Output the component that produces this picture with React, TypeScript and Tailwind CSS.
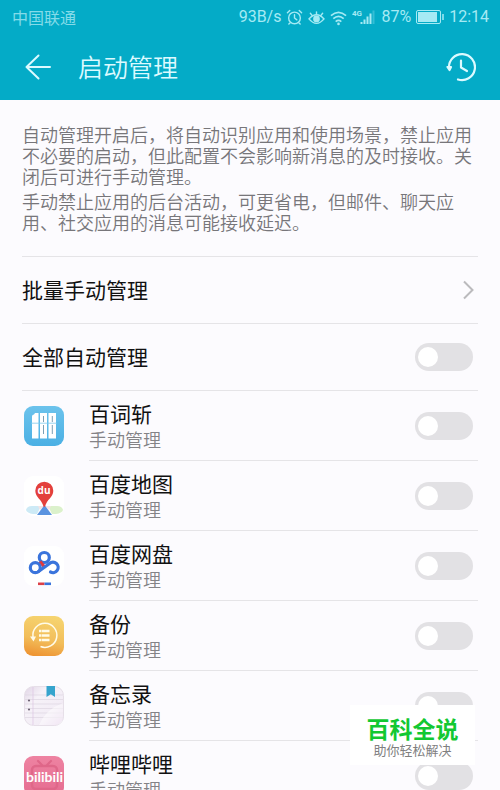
import { useState, type ReactNode } from 'react'

interface AppEntry {
  id: string
  name: string
  icon: ReactNode
}

function BaicizhanIcon() {
  return (
    <svg className="size-10" viewBox="0 0 40 40" aria-hidden="true">
      <defs>
        <linearGradient id="bcz" x1="0" y1="0" x2="0" y2="1">
          <stop offset="0" stopColor="#6cc3ec" />
          <stop offset="1" stopColor="#4bb0e4" />
        </linearGradient>
      </defs>
      <rect width="40" height="40" rx="9" fill="url(#bcz)" />
      <path d="M8 10.500q0-2 2-2l1-1.500h3.500v25.500H8zM16 7h7v25.500h-7zM24.500 7h7.500v25.500h-7.500z" fill="#fff" />
      <path d="M19.500 10v6M19.500 19v9M28.300 10v6M28.300 19v9" stroke="#7d9fb3" strokeWidth="1" />
      <path d="M7 17.200h26" stroke="#7fcaee" strokeWidth="0.800" />
    </svg>
  )
}

function MapIcon() {
  return (
    <svg className="size-10" viewBox="0 0 40 40" aria-hidden="true">
      <rect width="40" height="40" rx="9" fill="#fff" />
      <path d="M2 34q1-4 6-4h9l-4 8H9q-6-1-7-4z" fill="#cdeaf6" />
      <path d="M39 34q-1-4-6-4h-9l4 8h4q6-1 7-4z" fill="#dbf1cb" />
      <path d="M14 30h6l-4 4zM27 30h-6l4 4z" fill="#f6e3e3" />
      <path d="M20.500 29 28 39H13z" fill="#5a93e0" />
      <path d="M20.300 5.700a9 9 0 0 1 9 9c0 6.500-6.500 8.500-8.300 16h-1.400c-1.800-7.500-8.300-9.500-8.300-16a9 9 0 0 1 9-9z" fill="#e3403c" />
      <text x="20" y="18" textAnchor="middle" fontSize="10" fontWeight="700" fill="#fff" fontFamily="Open Sans, sans-serif">du</text>
    </svg>
  )
}

function NetdiskIcon() {
  return (
    <svg className="size-10" viewBox="0 0 40 40" fill="none" aria-hidden="true">
      <rect width="40" height="40" rx="9" fill="#fff" />
      <circle cx="20.300" cy="11.500" r="5" stroke="#3a74dc" strokeWidth="3.200" />
      <path d="M16 15.500 20 20.500" stroke="#e0393e" strokeWidth="3.400" />
      <circle cx="11.300" cy="21.700" r="5" stroke="#3a74dc" strokeWidth="3.200" />
      <path d="M14.500 25.500 25.500 17.500a5.200 5.200 0 1 1 1 8.500" stroke="#3a74dc" strokeWidth="3.200" strokeLinecap="round" />
      <path d="M14 37.800h6.500" stroke="#dc4048" strokeWidth="2.600" />
      <path d="M20.500 37.800h6.500" stroke="#3a74dc" strokeWidth="2.600" />
    </svg>
  )
}

function BackupIcon() {
  return (
    <svg className="size-10" viewBox="0 0 40 40" fill="none" aria-hidden="true">
      <defs>
        <linearGradient id="backup" x1="0.600" y1="0" x2="0.400" y2="1">
          <stop offset="0" stopColor="#f6d470" />
          <stop offset="0.600" stopColor="#f2bd5a" />
          <stop offset="1" stopColor="#ee9534" />
        </linearGradient>
      </defs>
      <rect width="40" height="40" rx="9" fill="url(#backup)" />
      <path d="M9 21A12 12 0 1 1 16.500 30.500" stroke="#fffbe8" strokeWidth="1.500" />
      <path d="M6 20.500h6l-2.500 5z" fill="#fffbe8" />
      <path d="M15 15h2M17.500 15h8M15 19.500h2M17.500 19.500h8M15 24h2M17.500 24h8" stroke="#fffbe8" strokeWidth="2.600" />
    </svg>
  )
}

function MemoIcon() {
  return (
    <svg className="size-10" viewBox="0 0 40 40" fill="none" aria-hidden="true">
      <defs>
        <linearGradient id="memo" x1="0" y1="0" x2="1" y2="1">
          <stop offset="0" stopColor="#e0d4e6" />
          <stop offset="0.300" stopColor="#f6f2f8" />
          <stop offset="0.650" stopColor="#f3edf6" />
          <stop offset="1" stopColor="#e3cbe8" />
        </linearGradient>
      </defs>
      <rect x="0.500" y="0.500" width="39" height="39" rx="9" fill="url(#memo)" stroke="#e6dfe8" />
      <path d="M1 9h38M1 13.500h38M1 18h38M1 22.500h38M1 27h38M1 31.500h38" stroke="#ddd6e1" strokeWidth="0.700" />
      <path d="M9 1v38" stroke="#dcc4e2" strokeWidth="0.700" />
      <path d="M15 39Q22 23 39 17v14q0 8-8 8z" fill="#fff" opacity="0.500" />
      <circle cx="5" cy="14.500" r="1.100" fill="#6f6575" />
      <circle cx="5" cy="23.500" r="1.100" fill="#6f6575" />
      <path d="M22.500 0H31v11l-4.200-2.800-4.300 2.800z" fill="#36a4cd" />
    </svg>
  )
}

function BilibiliIcon() {
  return (
    <svg className="size-10" viewBox="0 0 40 40" fill="none" aria-hidden="true">
      <defs>
        <linearGradient id="bili" x1="0" y1="0" x2="0" y2="1">
          <stop offset="0" stopColor="#ee83a2" />
          <stop offset="1" stopColor="#e56c90" />
        </linearGradient>
      </defs>
      <rect width="40" height="40" rx="9" fill="url(#bili)" />
      <rect x="8" y="10" width="25" height="23" rx="4" stroke="#df6789" strokeWidth="2.500" />
      <path d="M14 5l4 4M27 5l-4 4" stroke="#df6789" strokeWidth="2.200" strokeLinecap="round" />
      <text x="20.500" y="26" textAnchor="middle" fontSize="14" fontWeight="700" fill="#fff" fontFamily="Liberation Sans Narrow, Lato, sans-serif">bilibili</text>
    </svg>
  )
}

const apps: AppEntry[] = [
  { id: 'baicizhan', name: '百词斩', icon: <BaicizhanIcon /> },
  { id: 'map', name: '百度地图', icon: <MapIcon /> },
  { id: 'netdisk', name: '百度网盘', icon: <NetdiskIcon /> },
  { id: 'backup', name: '备份', icon: <BackupIcon /> },
  { id: 'memo', name: '备忘录', icon: <MemoIcon /> },
  { id: 'bilibili', name: '哔哩哔哩', icon: <BilibiliIcon /> },
]

interface SwitchProps {
  id: string
  checked: boolean
  onChange: (checked: boolean) => void
}

function Switch({ id, checked, onChange }: SwitchProps) {
  return (
    <input
      id={id}
      type="checkbox"
      role="switch"
      checked={checked}
      onChange={(e) => onChange(e.target.checked)}
      className="flex h-7 w-[58px] shrink-0 cursor-pointer appearance-none items-center rounded-full bg-[#e2e1e4] px-[3px] before:size-5 before:rounded-full before:bg-white checked:justify-end checked:bg-[#04abc7]"
    />
  )
}

function StatusBar() {
  return (
    <div className="flex h-[34px] items-center justify-between pr-[11px] pl-3 text-[#a5eaf4]">
      <span className="text-base text-[#84dbe9]">中国联通</span>
      <div className="flex items-center gap-[5px] font-[Roboto,sans-serif] text-base">
        <span>93B/s</span>
        <svg className="size-[17px]" viewBox="0 0 18 18" fill="none" stroke="currentColor" strokeWidth="1.500" strokeLinecap="round" aria-hidden="true">
          <circle cx="9" cy="9.500" r="6.200" />
          <path d="M9 6v3.500l2.500 2M1.500 4 4 1.500M16.500 4 14 1.500M4.500 14.500 3 16M13.500 14.500 15 16" />
        </svg>
        <svg className="size-[17px]" viewBox="0 0 18 18" fill="none" stroke="currentColor" strokeWidth="1.500" strokeLinecap="round" aria-hidden="true">
          <path d="M1 10.500q8-9 16 0-8 9.500-16 0z" />
          <circle cx="9" cy="10.500" r="2.800" fill="currentColor" />
          <path d="M9 5.500V3M4.500 7 2.500 4.500M13.500 7l2-2.500" />
        </svg>
        <svg className="size-[17px]" viewBox="0 0 18 18" fill="none" stroke="currentColor" strokeWidth="1.800" aria-hidden="true">
          <path d="M1 7q8-7 16 0M3.500 10.300q5.500-5 11 0M6 13.300q3-2.500 6 0" />
          <circle cx="9" cy="15.800" r="1.400" fill="currentColor" stroke="none" />
        </svg>
        <svg className="h-[18px] w-6" viewBox="0 0 24 18" aria-hidden="true">
          <text x="0" y="8" fontSize="8" fontWeight="700" fill="currentColor" fontFamily="Liberation Sans Narrow, Roboto, sans-serif">4G</text>
          <path d="M8.500 14h2v2h-2zM11.500 11.500h2V16h-2zM14.500 8.500h2V16h-2zM17.500 5.500h2V16h-2z" fill="currentColor" />
          <path d="M20.500 2.500h2V16h-2z" fill="currentColor" opacity="0.300" />
        </svg>
        <span>87%</span>
        <svg className="h-[18px] w-7" viewBox="0 0 28 18" fill="none" stroke="currentColor" aria-hidden="true">
          <rect x="0.500" y="2.500" width="24" height="13" rx="1.500" />
          <path d="M2 4h19v10H2z" fill="currentColor" stroke="none" />
          <path d="M27 6v6" strokeWidth="1.500" />
        </svg>
        <span>12:14</span>
      </div>
    </div>
  )
}

export default function App() {
  const [enabled, setEnabled] = useState<Record<string, boolean>>({})

  const allEnabled = apps.every((app) => enabled[app.id])

  const toggleAll = (value: boolean) => {
    setEnabled(Object.fromEntries(apps.map((app) => [app.id, value])))
  }

  return (
    <div className="flex h-screen flex-col overflow-hidden bg-[#fcfbfe] font-['Noto_Sans_CJK_SC',sans-serif] text-[#111]">
      <header className="shrink-0 bg-[#04abc7]">
        <StatusBar />
        <div className="flex h-[66px] items-center pr-6 pl-[25px] text-[#dcfaff]">
          <button type="button" aria-label="返回" className="cursor-pointer">
            <svg className="size-[27px]" viewBox="0 0 27 27" fill="none" stroke="currentColor" strokeWidth="2" strokeLinecap="round" strokeLinejoin="round" aria-hidden="true">
              <path d="M13.500 1.500 1.500 13 13.500 24.500M1.500 13h23.500" />
            </svg>
          </button>
          <h1 className="ml-[26px] flex-1 text-[25px] font-[350]">启动管理</h1>
          <button type="button" aria-label="历史记录" className="cursor-pointer">
            <svg className="size-[30px]" viewBox="0 0 30 30" fill="none" stroke="currentColor" strokeWidth="2.200" strokeLinecap="round" strokeLinejoin="round" aria-hidden="true">
              <path d="M3 16A13 13 0 1 1 12 27.500" />
              <path d="M15 8.500v7l6 3.500" />
              <path d="M1.500 15h3.500L3.500 18z" fill="currentColor" />
            </svg>
          </button>
        </div>
      </header>

      <main className="px-[22px]">
        <div className="space-y-1 pt-6 pb-[23px] text-lg leading-[21px] font-[350] text-[#77767a]">
          <p>自动管理开启后，将自动识别应用和使用场景，禁止应用不必要的启动，但此配置不会影响新消息的及时接收。关闭后可进行手动管理。</p>
          <p>手动禁止应用的后台活动，可更省电，但邮件、聊天应用、社交应用的消息可能接收延迟。</p>
        </div>

        <button type="button" className="flex h-[67px] w-full cursor-pointer items-center justify-between border-t border-[#e5e4e7] pr-1 text-[21px]">
          批量手动管理
          <svg className="h-5 w-3" viewBox="0 0 12 20" fill="none" stroke="#bbbabd" strokeWidth="2" aria-hidden="true">
            <path d="M2 1.500 10.500 10 2 18.500" />
          </svg>
        </button>

        <div className="flex h-[67px] items-center justify-between border-t border-[#e5e4e7] pr-[5px] text-[21px]">
          <label htmlFor="all">全部自动管理</label>
          <Switch id="all" checked={allEnabled} onChange={toggleAll} />
        </div>

        <ul className="border-t border-[#e5e4e7]">
          {apps.map((app) => (
            <li key={app.id} className="group flex h-[70px] items-center pl-[2px]">
              {app.icon}
              <div className="ml-[25px] flex h-full flex-1 items-center justify-between border-b border-[#e5e4e7] pr-[5px] group-last:border-b-0">
                <label htmlFor={app.id} className="flex flex-col pb-[2px]">
                  <span className="text-[21px] leading-7">{app.name}</span>
                  <span className="text-lg leading-6 font-[350] text-[#848387]">手动管理</span>
                </label>
                <Switch
                  id={app.id}
                  checked={!!enabled[app.id]}
                  onChange={(value) => setEnabled((prev) => ({ ...prev, [app.id]: value }))}
                />
              </div>
            </li>
          ))}
        </ul>
      </main>

      <aside className="fixed right-[25px] bottom-[25px] flex h-[60px] w-[125px] flex-col items-center justify-center bg-white pt-[2px]">
        <strong className="text-[23px] leading-7 font-bold text-[#12c832]">百科全说</strong>
        <span className="text-[13px] leading-4 text-[#808080]">助你轻松解决</span>
      </aside>
    </div>
  )
}
